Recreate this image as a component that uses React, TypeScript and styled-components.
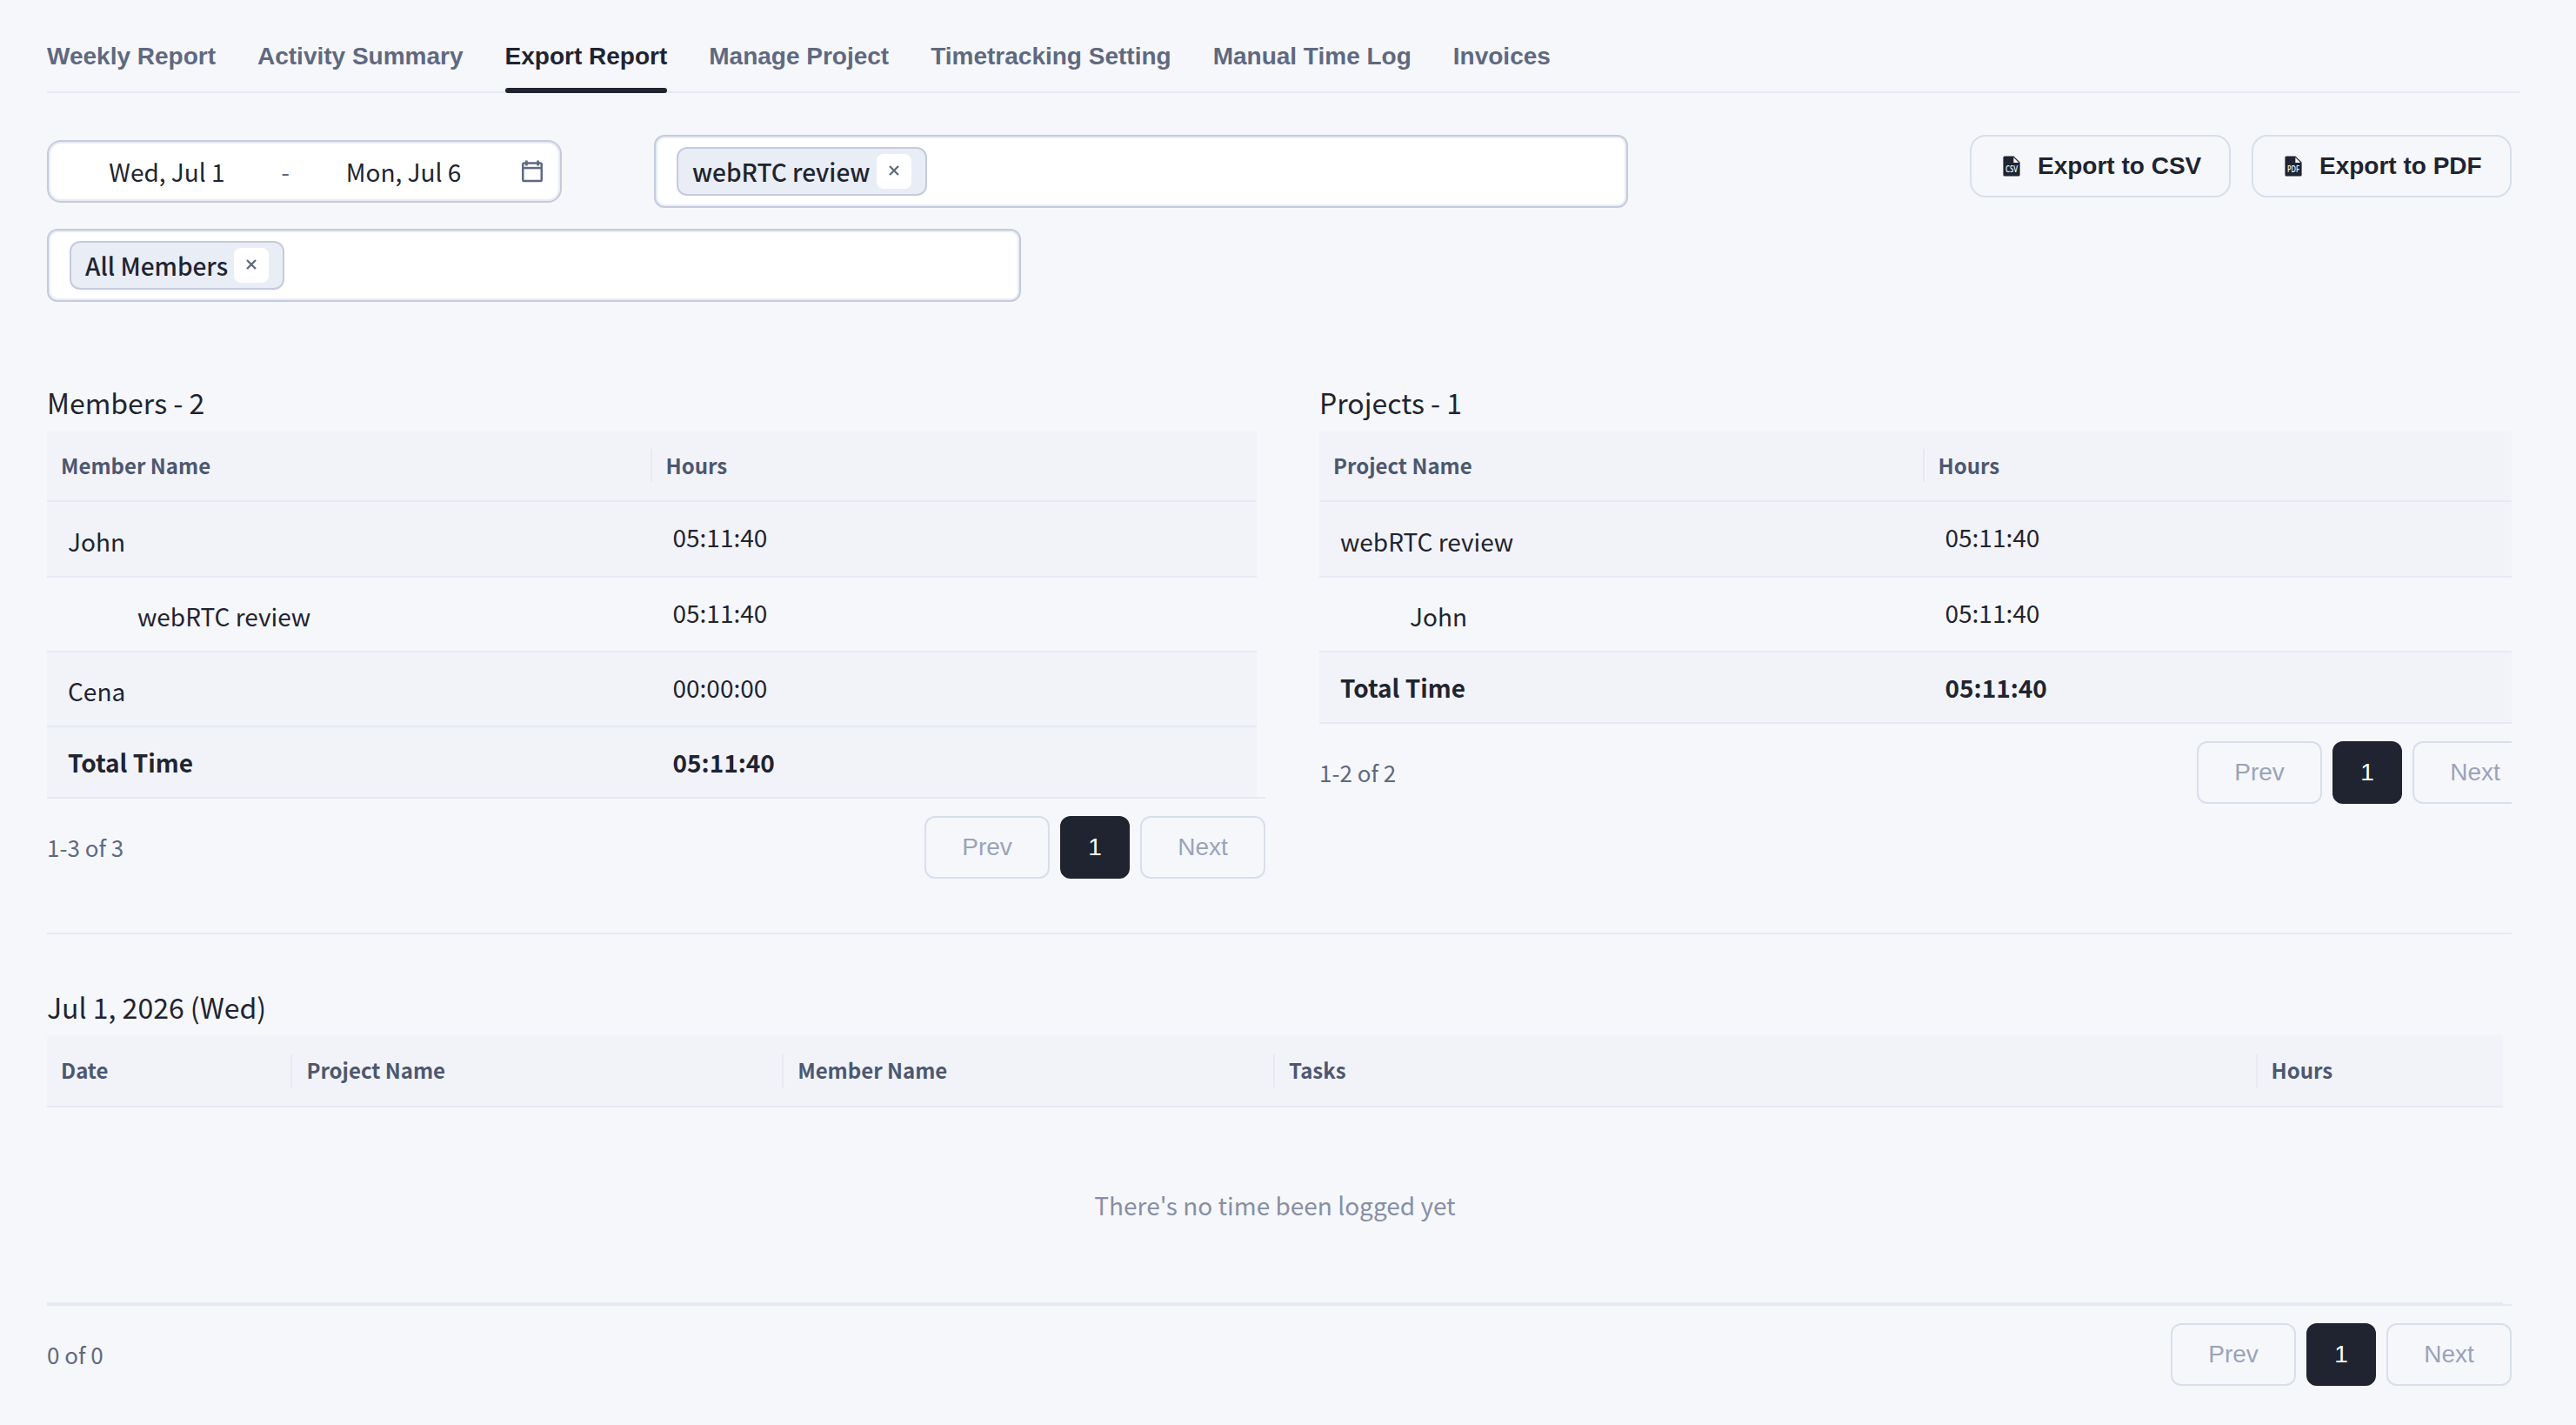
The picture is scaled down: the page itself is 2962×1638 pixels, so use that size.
import React from "react";
import styled, { createGlobalStyle } from "styled-components";

const sans = `"Noto Sans CJK JP", "Noto Sans CJK SC", "Noto Sans", sans-serif`;
const arial = `"Liberation Sans", Arial, sans-serif`;

const Global = createGlobalStyle`
  * { box-sizing: border-box; }
  html, body { margin: 0; background: #f6f7fb; }
  body { font-family: ${sans}; color: #1f2430; font-size: 28px; line-height: 40px; overflow: hidden; }
  button { font: inherit; color: inherit; background: none; border: 0; margin: 0; padding: 0; }
`;

const Page = styled.main`
  width: 2962px;
  height: 1638px;
  padding: 0 64px 0 54px;
  overflow: hidden;
`;

const Tabs = styled.nav`
  display: flex;
  gap: 48px;
  height: 107px;
  border-bottom: 2px solid #e7eaf3;
`;

const Tab = styled.button<{ $active?: boolean }>`
  display: flex;
  flex-direction: column;
  justify-content: space-between;
  height: 107px;
  padding-top: 49px;
  font: 700 28px/32px ${arial};
  color: ${(p) => (p.$active ? "#1f2430" : "#5f6980")};
  white-space: nowrap;
  &::after {
    content: "";
    height: 6px;
    border-radius: 4px;
    background: ${(p) => (p.$active ? "#1f2430" : "transparent")};
  }
`;

const Content = styled.div`
  width: 2834px;
`;

const Toolbar = styled.section`
  display: flex;
  justify-content: space-between;
  align-items: flex-start;
  padding-top: 48px;
`;

const Filters = styled.div`
  display: grid;
  grid-template-columns: 698px 1120px;
  row-gap: 24px;
  align-items: center;
`;

const Field = styled.div`
  display: flex;
  align-items: center;
  background: #fff;
  border: 2px solid #c5cbdd;
  box-shadow: inset 0 0 0 2px #e7ecf5;
`;

const DateRange = styled(Field)`
  width: 592px;
  height: 72px;
  border-radius: 16px;
  padding-right: 20px;
`;

const DateValue = styled.span`
  width: 272px;
  text-align: center;
`;

const Dash = styled.span`
  width: 0;
  display: flex;
  justify-content: center;
  color: #5f6980;
`;

const CalendarSlot = styled.span`
  display: flex;
  margin-left: auto;
`;

const Select = styled(Field)<{ $wide?: boolean }>`
  width: 1120px;
  height: 84px;
  border-radius: 12px;
  padding-left: 24px;
  grid-column: ${(p) => (p.$wide ? "1 / -1" : "auto")};
`;

const Chip = styled.span`
  display: flex;
  align-items: center;
  height: 56px;
  padding: 0 16px;
  gap: 7.4px;
  border: 2px solid #c5cbdd;
  border-radius: 12px;
  background: #e9edf6;
  font-weight: 500;
  white-space: nowrap;
`;

const Remove = styled.button`
  display: grid;
  place-items: center;
  width: 40px;
  height: 40px;
  padding-bottom: 2px;
  border-radius: 8px;
  background: #fff;
`;

const Actions = styled.div`
  display: flex;
  gap: 24px;
`;

const ExportButton = styled.button<{ $width: number }>`
  display: flex;
  align-items: center;
  width: ${(p) => p.$width}px;
  height: 72px;
  padding-left: 36px;
  gap: 20px;
  border: 2px solid #d8dfeb;
  border-radius: 18px;
  font: 700 28px/32px ${arial};
  white-space: nowrap;
`;

const FileGlyph = styled.svg`
  flex: none;
  overflow: visible;
`;

const Summary = styled.section`
  display: grid;
  grid-template-columns: 1401px 1371px;
  column-gap: 62px;
  padding: 92px 0 62px;
  border-bottom: 2px solid #e5eaf2;
`;

const Panel = styled.div`
  min-width: 0;
  overflow: hidden;
`;

const Title = styled.h2`
  margin: 0;
  height: 56px;
  font-size: 32px;
  font-weight: 400;
  line-height: 46px;
`;

const HeadRow = styled.div<{ $cols: string; $width: number; $tall?: boolean }>`
  display: grid;
  grid-template-columns: ${(p) => p.$cols};
  align-items: center;
  width: ${(p) => p.$width}px;
  height: ${(p) => (p.$tall ? 83 : 82)}px;
  background: #f2f3f8;
  border-bottom: 2px solid #e5eaf2;
  line-height: ${(p) => (p.$tall ? 36 : 38)}px;
`;

const HeadCell = styled.div`
  height: 38px;
  padding-left: 16px;
  font-size: 24px;
  font-weight: 700;
  color: #4c5870;
  border-right: 2px solid #e7eaf2;
  &:last-child { border-right: 0; }
`;

const Row = styled.div<{ $shade?: boolean; $total?: boolean; $height: number }>`
  display: grid;
  grid-template-columns: 1fr 1fr;
  width: 1391px;
  height: ${(p) => p.$height}px;
  border-bottom: ${(p) => (p.$total ? 0 : 2)}px solid #e5eaf2;
  background: ${(p) => (p.$shade ? "#f2f3f8" : "transparent")};
  font-weight: ${(p) => (p.$total ? 700 : 400)};
`;

const NameCell = styled.div<{ $indent?: boolean; $top: number }>`
  padding: ${(p) => p.$top}px 0 0 ${(p) => (p.$indent ? 104 : 24)}px;
`;

const HoursCell = styled.div`
  padding: 20px 0 0 24px;
`;

const Footer = styled.div<{ $width: number }>`
  display: flex;
  justify-content: space-between;
  width: ${(p) => p.$width}px;
  padding-top: 20px;
  border-top: 2px solid #e5eaf2;
`;

const Count = styled.span`
  padding-top: 16px;
  font-size: 26px;
  line-height: 40px;
  color: #5f6980;
`;

const Pager = styled.div`
  display: flex;
  gap: 12px;
`;

const PageButton = styled.button<{ $current?: boolean }>`
  width: ${(p) => (p.$current ? 80 : 144)}px;
  height: 72px;
  border: 2px solid ${(p) => (p.$current ? "#1f2430" : "#d8dfeb")};
  border-radius: 12px;
  background: ${(p) => (p.$current ? "#1f2430" : "transparent")};
  color: ${(p) => (p.$current ? "#fff" : "#9aa3b9")};
  font: 400 28px/32px ${arial};
`;

const Log = styled.section`
  padding-top: 60px;
`;

const Empty = styled.div`
  display: grid;
  place-items: center;
  width: 2824px;
  height: 226px;
  color: #868fa5;
  border-bottom: 2px solid #e5eaf2;
`;

const CalendarIcon = () => (
  <svg width="24" height="26" viewBox="0 0 24 26" fill="none" stroke="#5f6980" strokeWidth="2.5">
    <rect x="1.25" y="3.4" width="21.5" height="20.6" rx="1.6" />
    <path d="M1 9.1h22" />
    <path d="M5.4 0.4v6M18.6 0.4v6" strokeWidth="2.7" />
  </svg>
);

const CrossIcon = () => (
  <svg width="12" height="12" viewBox="0 0 12 12" stroke="#5f6980" strokeWidth="2.3">
    <path d="M1 1l10 10M11 1L1 11" />
  </svg>
);

const FileIcon = ({ label }: { label: string }) => (
  <FileGlyph width="20" height="24" viewBox="0 0 20 24">
    <path d="M2 0.4h10.4l7.2 7.2V22a1.6 1.6 0 0 1-1.6 1.6H2A1.6 1.6 0 0 1 .4 22V2A1.6 1.6 0 0 1 2 .4z" fill="#1f2430" />
    <path d="M12.3 2v6h6z" fill="#f6f7fb" />
    <text x="10" y="18.8" textAnchor="middle" textLength="14" lengthAdjust="spacingAndGlyphs" fontFamily="Open Sans, sans-serif" fontWeight="600" fontSize="10" fill="#f6f7fb">
      {label}
    </text>
  </FileGlyph>
);

const Pagination = () => (
  <Pager>
    <PageButton>Prev</PageButton>
    <PageButton $current>1</PageButton>
    <PageButton>Next</PageButton>
  </Pager>
);

type Entry = { name: string; hours: string; child?: boolean };

const SummaryTable = ({ title, column, rows, total, count }: { title: string; column: string; rows: Entry[]; total: string; count: string }) => (
  <Panel>
    <Title>{title}</Title>
    <HeadRow $cols="1fr 1fr" $width={1391}>
      <HeadCell>{column}</HeadCell>
      <HeadCell>Hours</HeadCell>
    </HeadRow>
    {rows.map((r, i) => (
      <Row key={i} $shade={!r.child} $height={i === 0 ? 87 : 86}>
        <NameCell $indent={r.child} $top={i === 0 ? 25 : 24}>{r.name}</NameCell>
        <HoursCell>{r.hours}</HoursCell>
      </Row>
    ))}
    <Row $shade $total $height={80}>
      <NameCell $top={20}>Total Time</NameCell>
      <HoursCell>{total}</HoursCell>
    </Row>
    <Footer $width={1401}>
      <Count>{count}</Count>
      <Pagination />
    </Footer>
  </Panel>
);

const tabs = ["Weekly Report", "Activity Summary", "Export Report", "Manage Project", "Timetracking Setting", "Manual Time Log", "Invoices"];

const members: Entry[] = [
  { name: "John", hours: "05:11:40" },
  { name: "webRTC review", hours: "05:11:40", child: true },
  { name: "Cena", hours: "00:00:00" },
];

const projects: Entry[] = [
  { name: "webRTC review", hours: "05:11:40" },
  { name: "John", hours: "05:11:40", child: true },
];

export default function App() {
  return (
    <Page>
      <Global />
      <Tabs>
        {tabs.map((t) => (
          <Tab key={t} $active={t === "Export Report"}>{t}</Tab>
        ))}
      </Tabs>
      <Content>
        <Toolbar>
          <Filters>
            <DateRange>
              <DateValue>Wed, Jul 1</DateValue>
              <Dash>-</Dash>
              <DateValue>Mon, Jul 6</DateValue>
              <CalendarSlot><CalendarIcon /></CalendarSlot>
            </DateRange>
            <Select>
              <Chip>webRTC review<Remove><CrossIcon /></Remove></Chip>
            </Select>
            <Select $wide>
              <Chip>All Members<Remove><CrossIcon /></Remove></Chip>
            </Select>
          </Filters>
          <Actions>
            <ExportButton $width={300}><FileIcon label="CSV" />Export to CSV</ExportButton>
            <ExportButton $width={299}><FileIcon label="PDF" />Export to PDF</ExportButton>
          </Actions>
        </Toolbar>
        <Summary>
          <SummaryTable title="Members - 2" column="Member Name" rows={members} total="05:11:40" count="1-3 of 3" />
          <SummaryTable title="Projects - 1" column="Project Name" rows={projects} total="05:11:40" count="1-2 of 2" />
        </Summary>
        <Log>
          <Title>Jul 1, 2026 (Wed)</Title>
          <HeadRow $cols="1fr 2fr 2fr 4fr 1fr" $width={2824} $tall>
            {["Date", "Project Name", "Member Name", "Tasks", "Hours"].map((h) => (
              <HeadCell key={h}>{h}</HeadCell>
            ))}
          </HeadRow>
          <Empty>There's no time been logged yet</Empty>
          <Footer $width={2834}>
            <Count>0 of 0</Count>
            <Pagination />
          </Footer>
        </Log>
      </Content>
    </Page>
  );
}
